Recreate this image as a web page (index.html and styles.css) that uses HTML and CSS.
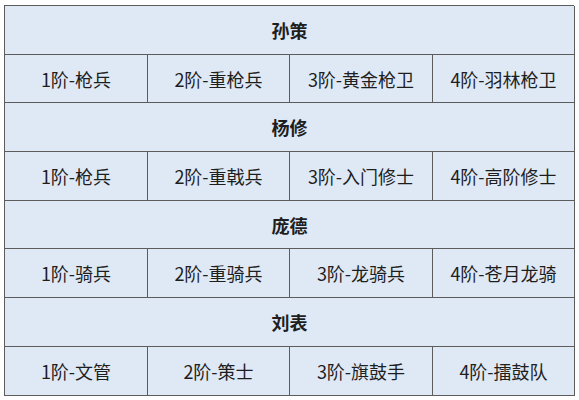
FILE: index.html
```html
<!DOCTYPE html>
<html lang="zh">
<head>
<meta charset="utf-8">
<link rel="stylesheet" href="styles.css">
</head>
<body>
<div class="table">
  <div class="head">孙策</div>
  <div class="cell">1阶-枪兵</div><div class="cell">2阶-重枪兵</div><div class="cell">3阶-黄金枪卫</div><div class="cell last">4阶-羽林枪卫</div>
  <div class="head">杨修</div>
  <div class="cell">1阶-枪兵</div><div class="cell">2阶-重戟兵</div><div class="cell">3阶-入门修士</div><div class="cell last">4阶-高阶修士</div>
  <div class="head">庞德</div>
  <div class="cell">1阶-骑兵</div><div class="cell">2阶-重骑兵</div><div class="cell">3阶-龙骑兵</div><div class="cell last">4阶-苍月龙骑</div>
  <div class="head">刘表</div>
  <div class="cell">1阶-文管</div><div class="cell">2阶-策士</div><div class="cell">3阶-旗鼓手</div><div class="cell last">4阶-擂鼓队</div>
</div>
</body>
</html>
```

FILE: styles.css
```css
html, body {
  margin: 0;
  padding: 0;
  background: #ffffff;
}
body {
  padding: 5px 5px 0 4px;
  font-family: "Noto Sans CJK SC", "Noto Sans", sans-serif;
  color: #1e1e1e;
}
.table {
  width: 570px;
  display: grid;
  grid-template-columns: 143px 142px 143px 142px;
  grid-auto-rows: 48.7px;
  border-top: 1px solid #5c5c5c;
  border-left: 1px solid #5c5c5c;
  box-sizing: border-box;
  background: #dfe9f6;
}
.head, .cell {
  display: flex;
  align-items: center;
  justify-content: center;
  border-right: 1px solid #5c5c5c;
  border-bottom: 1px solid #5c5c5c;
  font-size: 18px;
  line-height: 1;
}
.head {
  grid-column: 1 / -1;
  font-weight: 700;
}
```
